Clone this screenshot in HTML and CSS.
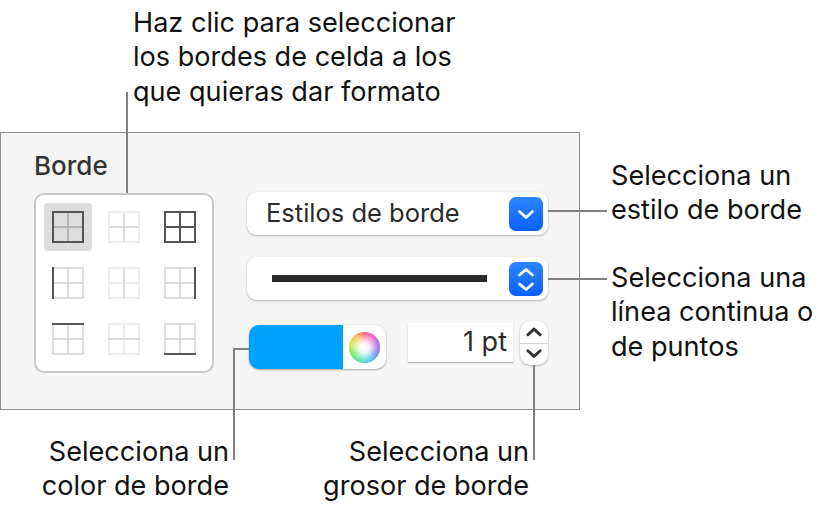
FILE: index.html
```html
<!DOCTYPE html>
<html lang="es">
<head>
<meta charset="utf-8">
<title>Borde</title>
<link rel="stylesheet" href="styles.css">
</head>
<body>
<main class="figure">
  <p class="note note-top">Haz clic para seleccionar<br>los bordes de celda a los<br>que quieras dar formato</p>

  <section class="panel">
    <h2 class="panel-title">Borde</h2>
    <div class="panel-body">
      <div class="border-grid">
        <div class="cell selected"><svg class="bi" viewBox="0 0 32 32"><path class="mid" d="M16 2V30M2 16H30"/><rect class="dark" x="1" y="1" width="30" height="30"/></svg></div>
        <div class="cell"><svg class="bi" viewBox="0 0 32 32"><rect class="faint" x="1" y="1" width="30" height="30"/><path class="light" d="M16 2V30M2 16H30"/></svg></div>
        <div class="cell"><svg class="bi" viewBox="0 0 32 32"><path class="dark" d="M16 2V30M2 16H30"/><rect class="dark" x="1" y="1" width="30" height="30"/></svg></div>

        <div class="cell"><svg class="bi" viewBox="0 0 32 32"><rect class="light" x="1" y="1" width="30" height="30"/><path class="light" d="M16 2V30M2 16H30"/><path class="dark" d="M1 0V32"/></svg></div>
        <div class="cell"><svg class="bi" viewBox="0 0 32 32"><rect class="faint" x="1" y="1" width="30" height="30"/><path class="faint" d="M2 16H30"/><path class="light" d="M16 0V32"/></svg></div>
        <div class="cell"><svg class="bi" viewBox="0 0 32 32"><rect class="light" x="1" y="1" width="30" height="30"/><path class="light" d="M16 2V30M2 16H30"/><path class="dark" d="M31 0V32"/></svg></div>

        <div class="cell"><svg class="bi" viewBox="0 0 32 32"><rect class="light" x="1" y="1" width="30" height="30"/><path class="light" d="M16 2V30M2 16H30"/><path class="dark" d="M0 1H32"/></svg></div>
        <div class="cell"><svg class="bi" viewBox="0 0 32 32"><rect class="faint" x="1" y="1" width="30" height="30"/><path class="faint" d="M16 2V30"/><path class="light" d="M0 16H32"/></svg></div>
        <div class="cell"><svg class="bi" viewBox="0 0 32 32"><rect class="light" x="1" y="1" width="30" height="30"/><path class="light" d="M16 2V30M2 16H30"/><path class="dark" d="M0 31H32"/></svg></div>
      </div>

      <div class="controls">
        <div class="select">
          <span class="select-label">Estilos de borde</span>
          <span class="select-btn"><svg class="chev" viewBox="0 0 34 34"><path d="M10.5 14.5L17 20.5L23.5 14.5"/></svg></span>
        </div>
        <div class="select">
          <span class="line-sample"></span>
          <span class="select-btn"><svg class="chev" viewBox="0 0 34 34"><path d="M10.5 13L17 7.5L23.5 13M10.5 22L17 27.5L23.5 22"/></svg></span>
        </div>
        <div class="color-row">
          <div class="well">
            <span class="well-swatch"></span>
            <span class="well-side"><span class="wheel"></span></span>
          </div>
          <div class="field">1 pt</div>
          <div class="stepper">
            <span class="step"><svg class="step-icon" viewBox="0 0 28 22"><path d="M7.5 14.5L14 8.5L20.5 14.5"/></svg></span>
            <span class="step step-down"><svg class="step-icon" viewBox="0 0 28 22"><path d="M7.5 7L14 13L20.5 7"/></svg></span>
          </div>
        </div>
      </div>
    </div>
  </section>

  <div class="notes-bottom">
    <p class="note note-color">Selecciona un<br>color de borde</p>
    <p class="note note-weight">Selecciona un<br>grosor de borde</p>
  </div>

  <p class="note note-style">Selecciona un<br>estilo de borde</p>
  <p class="note note-line">Selecciona una<br>línea continua o<br>de puntos</p>

  <span class="leader l-top"></span>
  <span class="leader l-style"></span>
  <span class="leader l-line"></span>
  <span class="leader l-color-h"></span>
  <span class="leader l-color-v"></span>
  <span class="leader l-weight"></span>
</main>
</body>
</html>
```

FILE: styles.css
```css
* { box-sizing: border-box; }

html, body {
  margin: 0;
  background: #fff;
}

.figure {
  position: relative;
  width: 822px;
  height: 511px;
  overflow: hidden;
  font-family: Inter, "Noto Sans", sans-serif;
  color: #111;
}

.note {
  margin: 0;
  font-size: 27.1px;
  line-height: 34.3px;
  white-space: nowrap;
}

.note-top {
  height: 132px;
  padding: 6px 0 0 133px;
}

.panel {
  width: 580px;
  height: 278px;
  padding: 19px 0 0 33px;
  background: #f5f5f5;
  border: 1px solid #8e8e8e;
}

.panel-title {
  margin: 0;
  height: 28px;
  font-size: 26px;
  line-height: 28px;
  font-weight: 500;
  color: #333;
}

.panel-body {
  display: flex;
  gap: 33px;
  margin-top: 13px;
}

.border-grid {
  display: grid;
  grid-template-columns: repeat(3, 48px);
  grid-auto-rows: 48px;
  gap: 8px;
  width: 180px;
  height: 180px;
  padding: 8px;
  background: #fff;
  border: 2px solid #c8c8c8;
  border-radius: 10px;
}

.cell {
  display: flex;
  align-items: center;
  justify-content: center;
  border-radius: 4px;
}

.cell.selected { background: #dcdcdc; }

.bi {
  width: 32px;
  height: 32px;
  fill: none;
  stroke-width: 2;
}

.dark { stroke: #555; }
.mid { stroke: #b4b4b4; }
.light { stroke: #dcdcdc; }
.faint { stroke: #eeeeee; }

.controls {
  display: flex;
  flex-direction: column;
  gap: 22px;
  width: 301px;
  margin-top: -1px;
}

.select {
  display: flex;
  align-items: center;
  justify-content: space-between;
  height: 43px;
  padding: 0 5px 0 19px;
  background: #fff;
  border-radius: 9px;
  box-shadow: 0 1px 2px rgba(0, 0, 0, .25), 0 0 1px rgba(0, 0, 0, .15);
}

.select-label {
  margin-top: -2px;
  font-size: 25.5px;
  font-weight: 400;
  color: #2b2b2b;
}

.select-btn {
  display: block;
  width: 34px;
  height: 34px;
  background: linear-gradient(#2a86ff, #0a60ff);
  border-radius: 7px;
}

.chev {
  display: block;
  width: 34px;
  height: 34px;
  fill: none;
  stroke: #fff;
  stroke-width: 2.8;
  stroke-linecap: round;
  stroke-linejoin: round;
}

.line-sample {
  display: block;
  width: 215px;
  height: 7px;
  margin-left: 6px;
  background: #2a2a2a;
}

.color-row {
  display: flex;
  align-items: flex-start;
  margin-top: -1px;
}

.well {
  display: flex;
  width: 137px;
  height: 44px;
  margin: 4px 22px 0 2px;
  overflow: hidden;
  background: #fff;
  border-radius: 10px;
  box-shadow: 0 1px 2px rgba(0, 0, 0, .3), 0 0 1px rgba(0, 0, 0, .2);
}

.well-swatch {
  width: 94px;
  background: #00a2ff;
}

.well-side {
  display: flex;
  align-items: center;
  justify-content: center;
  flex: 1;
}

.wheel {
  display: block;
  width: 31px;
  height: 31px;
  border-radius: 50%;
  background:
    radial-gradient(circle, #fff 0, rgba(255, 255, 255, .9) 22%, rgba(255, 255, 255, 0) 72%),
    conic-gradient(#f4506a, #e050c0, #a858e8, #6080f0, #40c8f0, #40e0a0, #60e050, #c8e840, #f4c040, #f4506a);
}

.field {
  width: 105px;
  height: 39px;
  margin: 2px 7px 0 0;
  padding-right: 6px;
  background: #fff;
  box-shadow: 0 1px 1px rgba(0, 0, 0, .25);
  font-size: 27px;
  line-height: 38px;
  text-align: right;
  color: #2b2b2b;
}

.stepper {
  display: flex;
  flex-direction: column;
  width: 28px;
  height: 44px;
  background: #fff;
  border-radius: 10px;
  box-shadow: 0 1px 2px rgba(0, 0, 0, .25), 0 0 1px rgba(0, 0, 0, .15);
}

.step {
  display: block;
  height: 22px;
}

.step-down { border-top: 1px solid #d5d5d5; }

.step-icon {
  display: block;
  width: 28px;
  height: 21px;
  fill: none;
  stroke: #333;
  stroke-width: 3;
  stroke-linecap: round;
  stroke-linejoin: round;
}

.notes-bottom {
  display: flex;
  margin-top: 25px;
}

.note-color {
  width: 229px;
  text-align: right;
}

.note-weight {
  width: 300px;
  text-align: right;
}

.note-style {
  position: absolute;
  left: 611px;
  top: 159px;
}

.note-line {
  position: absolute;
  left: 611px;
  top: 261px;
}

.leader {
  position: absolute;
  background: #808080;
}

.l-top { left: 126px; top: 92px; width: 2px; height: 101px; }
.l-style { left: 548px; top: 210px; width: 59px; height: 2px; }
.l-line { left: 548px; top: 278px; width: 59px; height: 2px; }
.l-color-h { left: 233px; top: 348px; width: 16px; height: 2px; }
.l-color-v { left: 233px; top: 348px; width: 2px; height: 112px; }
.l-weight { left: 533px; top: 365px; width: 2px; height: 95px; }
```
